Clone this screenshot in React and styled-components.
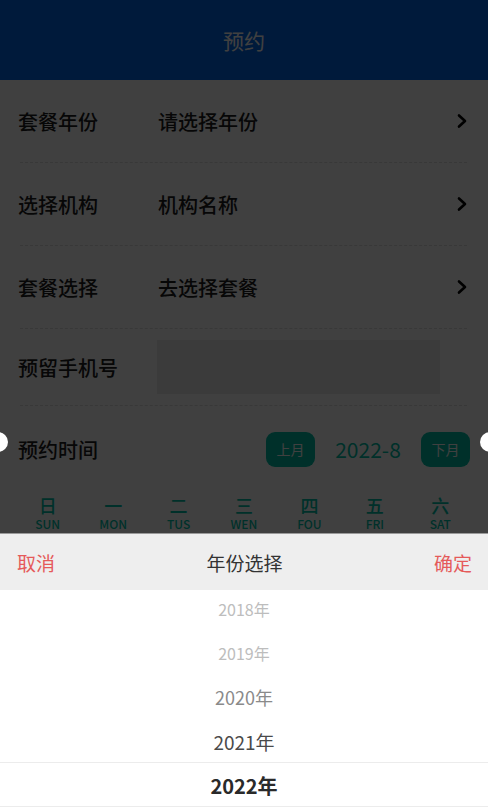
import React from 'react';
import styled, { createGlobalStyle } from 'styled-components';

const GlobalStyle = createGlobalStyle`
  * { box-sizing: border-box; }
  body {
    margin: 0;
    font-family: "Noto Sans CJK SC", "Noto Sans", sans-serif;
    background: #fff;
  }
`;

const Page = styled.div`
  position: relative;
  height: 807px;
  overflow: hidden;
  background: #fff;
`;

const Header = styled.header`
  height: 80px;
  background: #0068eb;
  color: #fff;
  font-size: 21px;
  display: flex;
  align-items: center;
  justify-content: center;
`;

const Row = styled.div`
  height: ${p => p.h || 82}px;
  display: flex;
  align-items: center;
  padding: 0 20px 0 18px;
  font-size: 20px;
  font-weight: 500;
  color: #1c1c1c;
`;

const Label = styled.div`
  width: 140px;
  flex-shrink: 0;
`;

const Value = styled.div`
  flex: 1;
`;

const PhoneInput = styled.div`
  width: 283px;
  height: 54px;
  margin-left: -1px;
  background: #ececec;
`;

const Divider = styled.div`
  margin: 0 21px 0 20px;
  border-top: 1px dashed #dedede;
`;

const Chevron = () => (
  <svg width="12" height="16" viewBox="0 0 12 16">
    <path d="M3 2.5 L9 8 L3 13.5" fill="none" stroke="#000" strokeWidth="2.6" strokeLinecap="round" strokeLinejoin="round" />
  </svg>
);

const TimeRow = styled.div`
  position: relative;
  height: 86px;
  display: flex;
  align-items: center;
  padding: 0 18px;
  font-size: 20px;
  font-weight: 500;
  color: #1c1c1c;
`;

const Notch = styled.span`
  position: absolute;
  top: 26px;
  ${p => (p.right ? 'right: -12px;' : 'left: -12px;')}
  width: 20px;
  height: 20px;
  border-radius: 50%;
  background: #fff;
  z-index: 20;
`;

const MonthNav = styled.div`
  margin-left: auto;
  display: flex;
  align-items: center;
  gap: 20px;
`;

const MonthButton = styled.button`
  width: 49px;
  height: 35px;
  border: none;
  border-radius: 9px;
  background: #00bfa8;
  color: #fff;
  font-family: inherit;
  font-size: 14px;
  padding: 0;
`;

const MonthText = styled.span`
  font-size: 21px;
  font-weight: 400;
  color: #00bfa8;
  width: 66px;
  text-align: center;
`;

const WeekGrid = styled.div`
  display: grid;
  grid-template-columns: repeat(7, 1fr);
  padding: 4px 15px 0;
  color: #00bfa8;
  text-align: center;
`;

const WeekDay = styled.div`
  display: flex;
  flex-direction: column;
  align-items: center;
  gap: 2px;
`;

const DayCn = styled.span`
  font-size: 18px;
  font-weight: 500;
  line-height: 19px;
`;

const DayEn = styled.span`
  font-size: 12px;
  font-weight: 500;
  line-height: 13px;
`;

const Overlay = styled.div`
  position: fixed;
  inset: 0;
  background: rgba(0, 0, 0, 0.75);
  z-index: 10;
`;

const Sheet = styled.div`
  position: fixed;
  left: 0;
  right: 0;
  bottom: 0;
  height: 274px;
  background: #fff;
  border-top: 1px solid #9a9a9a;
  z-index: 30;
  display: flex;
  flex-direction: column;
`;

const SheetBar = styled.div`
  height: 56px;
  flex-shrink: 0;
  background: #eeeeee;
  display: flex;
  align-items: center;
  justify-content: space-between;
  padding: 0 16px 0 17px;
  font-size: 19px;
`;

const BarAction = styled.span`
  color: #e55a5a;
`;

const BarTitle = styled.span`
  color: #333;
`;

const Wheel = styled.div`
  position: relative;
  flex: 1;
  overflow: hidden;
`;

const WheelItem = styled.div`
  height: 44px;
  display: flex;
  align-items: center;
  justify-content: center;
  font-size: ${p => p.size}px;
  font-weight: ${p => (p.active ? 600 : 400)};
  color: ${p => p.color};
  &:first-child {
    margin-top: -3px;
  }
`;

const Selection = styled.div`
  position: absolute;
  left: 0;
  right: 0;
  top: 172px;
  height: 45px;
  border-top: 1px solid #ececec;
  border-bottom: 1px solid #ececec;
  pointer-events: none;
`;

const weekDays = [
  ['日', 'SUN'], ['一', 'MON'], ['二', 'TUS'], ['三', 'WEN'],
  ['四', 'FOU'], ['五', 'FRI'], ['六', 'SAT'],
];

const years = [
  { label: '2018年', size: 16, color: '#bdbdbd' },
  { label: '2019年', size: 16, color: '#bdbdbd' },
  { label: '2020年', size: 18, color: '#8a8a8a' },
  { label: '2021年', size: 19, color: '#4a4a4a' },
  { label: '2022年', size: 20, color: '#2a2a2a', active: true },
];

export default function App() {
  return (
    <Page>
      <GlobalStyle />
      <Header>预约</Header>

      <Row>
        <Label>套餐年份</Label>
        <Value>请选择年份</Value>
        <Chevron />
      </Row>
      <Divider />
      <Row>
        <Label>选择机构</Label>
        <Value>机构名称</Value>
        <Chevron />
      </Row>
      <Divider />
      <Row>
        <Label>套餐选择</Label>
        <Value>去选择套餐</Value>
        <Chevron />
      </Row>
      <Divider />
      <Row h={76}>
        <Label>预留手机号</Label>
        <PhoneInput />
      </Row>
      <Divider />

      <TimeRow>
        <Notch />
        <Label>预约时间</Label>
        <MonthNav>
          <MonthButton>上月</MonthButton>
          <MonthText>2022-8</MonthText>
          <MonthButton>下月</MonthButton>
        </MonthNav>
        <Notch right />
      </TimeRow>

      <WeekGrid>
        {weekDays.map(([cn, en]) => (
          <WeekDay key={en}>
            <DayCn>{cn}</DayCn>
            <DayEn>{en}</DayEn>
          </WeekDay>
        ))}
      </WeekGrid>

      <Overlay />

      <Sheet>
        <SheetBar>
          <BarAction>取消</BarAction>
          <BarTitle>年份选择</BarTitle>
          <BarAction>确定</BarAction>
        </SheetBar>
        <Wheel>
          {years.map(y => (
            <WheelItem key={y.label} size={y.size} color={y.color} active={y.active}>
              {y.label}
            </WheelItem>
          ))}
          <Selection />
        </Wheel>
      </Sheet>
    </Page>
  );
}
